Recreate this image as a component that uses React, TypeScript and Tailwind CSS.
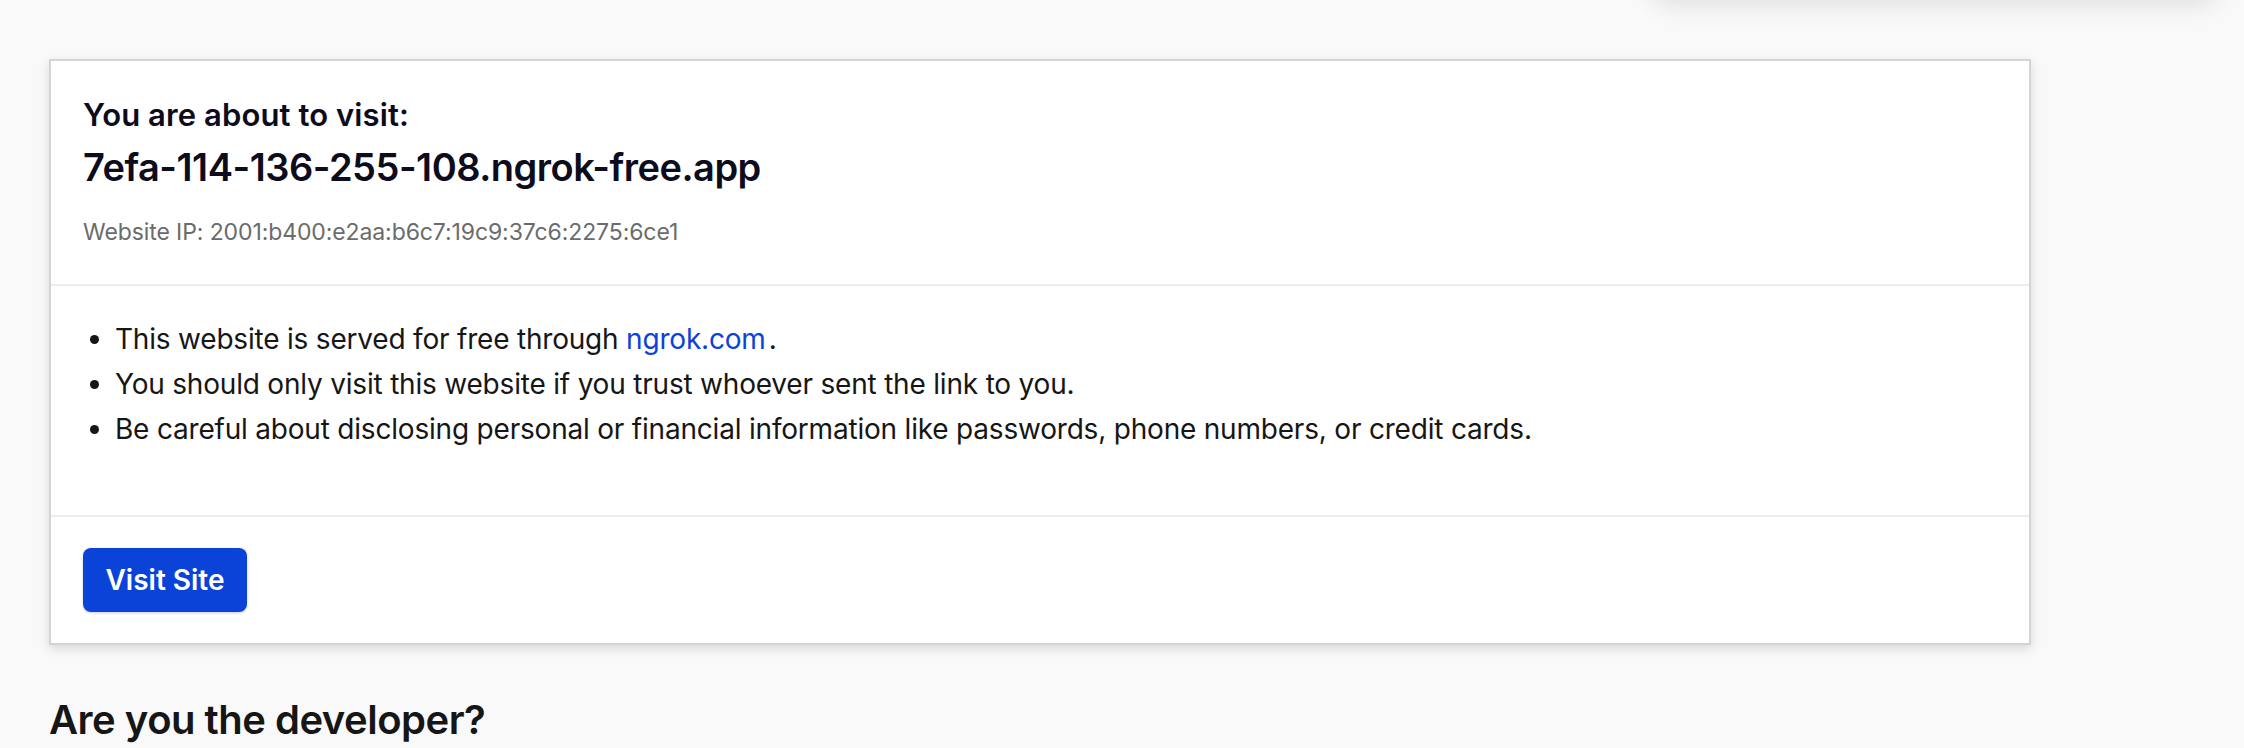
export default function App() {
  const font = { fontFamily: 'Inter, Lato, "Noto Sans", sans-serif' };
  return (
    <div className="relative min-h-screen overflow-hidden bg-[#f9f9f9] pl-[49px] pt-[59px]" style={font}>
      {/* floating header scrolled just out of view: only its shadow shows */}
      <div className="absolute left-[1650px] top-[-70px] h-[70px] w-[570px] rounded-[24px] bg-[#f9f9f9] shadow-[0_6px_24px_rgba(0,0,0,0.10)]"></div>

      <div className="w-[1982px] border-2 border-[#d4d4d4] bg-white shadow-[0_4px_10px_rgba(0,0,0,0.13)]">
        <div className="border-b-2 border-[#ececec] px-8 pb-9 pt-9">
          <h1 className="text-[31px] font-semibold leading-[36px] tracking-[0.1px] text-[#0c0c1d]">You are about to visit:</h1>
          <h2 className="mt-[10px] text-[38px] font-semibold leading-[48px] tracking-[-0.5px] text-[#0c0c1d]">
            7efa-114-136-255-108.ngrok-free.app
          </h2>
          <p className="mt-[25px] text-[23px] leading-[32px] tracking-[-0.1px] text-[#6b6b6b]">
            Website IP: 2001:b400:e2aa:b6c7:19c9:37c6:2275:6ce1
          </p>
        </div>

        <div className="border-b-2 border-[#ececec] px-8 pb-[63px] pt-[31px]">
          <ul className="list-disc pl-8 text-[28px] leading-[45px] tracking-[-0.2px] text-[#161616]">
            <li>
              This website is served for free through{' '}
              <a href="#" className="mr-[3px] text-[#0b43d9]">ngrok.com</a>.
            </li>
            <li>You should only visit this website if you trust whoever sent the link to you.</li>
            <li>
              Be careful about disclosing personal or financial information like passwords, phone numbers, or credit
              cards.
            </li>
          </ul>
        </div>

        <div className="px-8 pb-[31px] pt-[31px]">
          <button className="flex h-[64px] w-[164px] items-center justify-center rounded-[8px] bg-[#0b43d9] text-[28px] font-semibold text-white shadow-[0_1px_3px_rgba(0,0,0,0.2)]">
            Visit Site
          </button>
        </div>
      </div>

      <h2 className="mt-[51px] text-[40px] font-semibold leading-[48px] tracking-[-0.5px] text-[#161616]">Are you the developer?</h2>
    </div>
  );
}
